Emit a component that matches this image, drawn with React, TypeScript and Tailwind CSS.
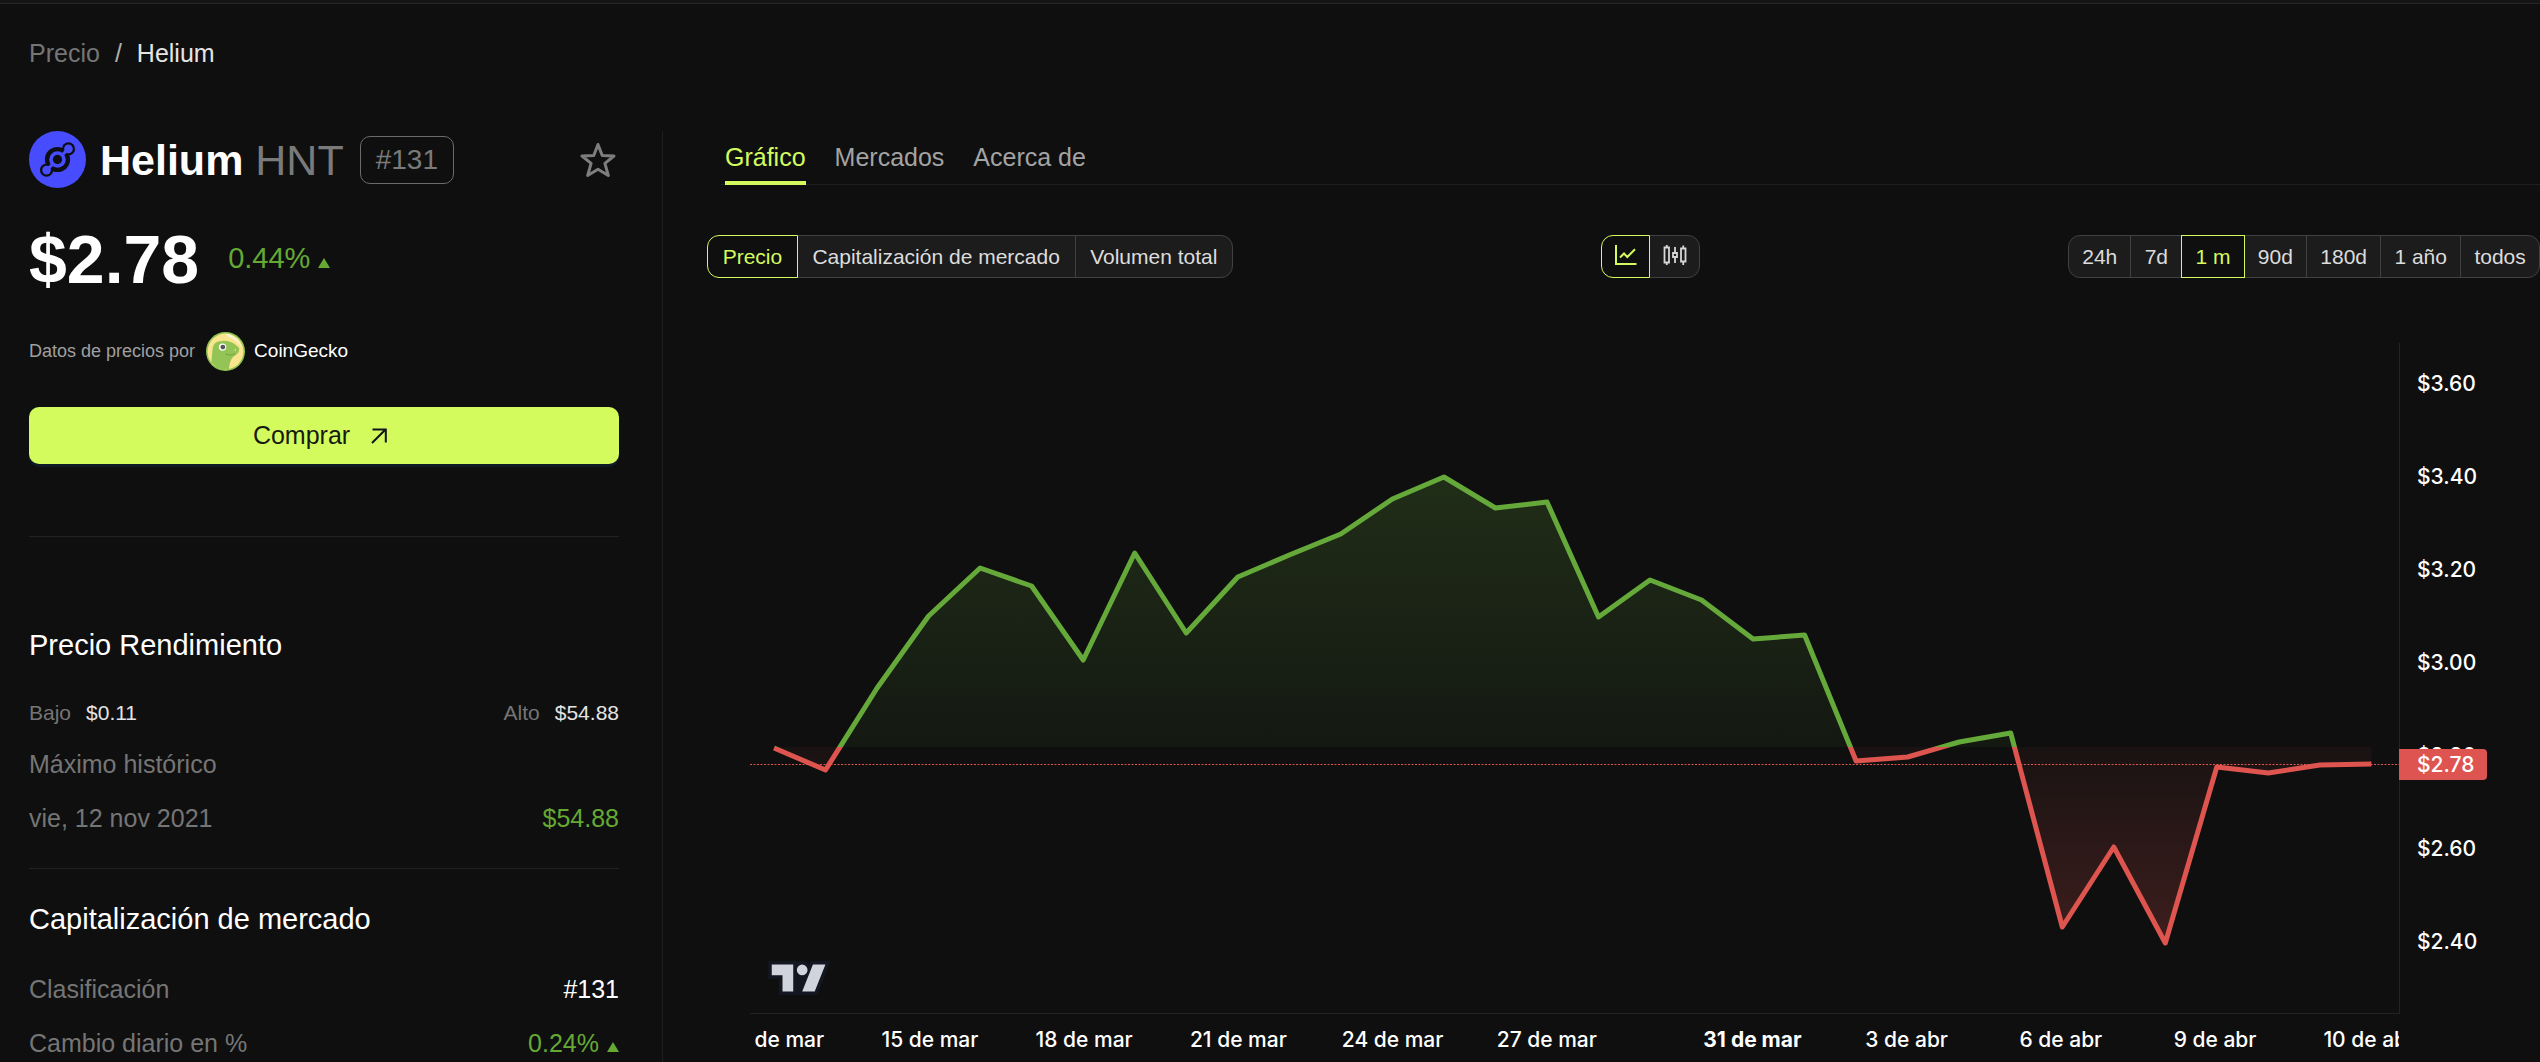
import React from "react";

const SANS = "font-['Liberation_Sans',Arial,sans-serif]";

const CHART_W = 1649;
const CHART_H = 670;
const BASELINE = 404;
const STEP = 51.53;
const FIRST_X = 24;

// Daily closing price, as chart heights measured from the top of the pane
const series = [
  405, 427, 345, 273, 225, 243, 317, 210, 290, 234, 212, 191, 156, 134, 165, 159,
  274, 237, 257, 296, 292, 418, 414, 399, 390, 584, 504, 600, 424, 430, 422, 421,
];

const dayLabels: Record<number, string> = {
  0: "12 de mar",
  3: "15 de mar",
  6: "18 de mar",
  9: "21 de mar",
  12: "24 de mar",
  15: "27 de mar",
  19: "31 de mar",
  22: "3 de abr",
  25: "6 de abr",
  28: "9 de abr",
  31: "10 de abr",
};

const priceTicks = ["$3.60", "$3.40", "$3.20", "$3.00", "$2.80", "$2.60", "$2.40"];

const points = series.map((y, i) => `${(FIRST_X + i * STEP).toFixed(1)},${y}`);
const linePath = `M${points.join("L")}`;
const areaPath = `${linePath}L${(FIRST_X + 31 * STEP).toFixed(1)},${BASELINE}L${FIRST_X},${BASELINE}Z`;

function HeliumLogo() {
  return (
    <svg viewBox="0 0 172 172" className="size-[57px] shrink-0" aria-label="Helium">
      <circle cx="86" cy="86" r="86" fill="#474dff" />
      <g fill="#0e0f14">
        <circle cx="86" cy="86" r="38" />
        <circle cx="119" cy="54" r="20" />
        <circle cx="53" cy="118" r="20" />
      </g>
      <g fill="#474dff">
        <circle cx="86" cy="86" r="25" />
        <circle cx="119" cy="54" r="13" />
        <circle cx="53" cy="118" r="13" />
      </g>
      <path d="M119 54 L53 118" stroke="#474dff" strokeWidth="9" />
      <circle cx="86" cy="86" r="14" fill="#0e0f14" />
    </svg>
  );
}

function GeckoLogo() {
  return (
    <svg viewBox="0 0 40 40" className="size-[39px] shrink-0" aria-hidden="true">
      <circle cx="20" cy="20" r="20" fill="#8dc351" />
      <circle cx="20" cy="20" r="18.4" fill="#f8e58e" />
      <path d="M20 1.8c7 .4 14 5 16.600 14-2.500-3.800-5.500-6.500-9.500-8.600C24 5.500 21.500 4.500 20 1.800Z" fill="#fbf3cf" />
      <path
        d="M5.500 31C6 26 6.300 20 7 16c.8-4.500 4.500-7 9-6.500 2.500-.8 5.500-.6 8.500.5 3 1 5 2.500 7 4 2.200 1.500 3 3 2.500 5-.5 3-3.500 4.600-6 6.500-2.500 2.500-4 6.500-4.500 12.600A18.400 18.400 0 0 1 5.500 31Z"
        fill="#94c356"
      />
      <circle cx="17" cy="15.500" r="3.800" fill="#fff" />
      <circle cx="17.300" cy="15.500" r="2.500" fill="#58595b" />
      <path d="M20 22.500c3 1.600 7 1.300 9.500-.3" stroke="#5f9b3a" strokeWidth=".8" fill="none" />
      <circle cx="30" cy="18.500" r=".7" fill="#e8f3d8" />
    </svg>
  );
}

function Star() {
  return (
    <svg viewBox="0 0 36 36" className="size-9" fill="none" stroke="#7d7d7d" strokeWidth="3" strokeLinejoin="round">
      <path d="M18 2.500 L22.200 13.400 L34 14 L24.900 21.300 L28.300 33.500 L18 27.300 L7.700 33.500 L11.100 21.300 L2 14 L13.800 13.400 Z" />
    </svg>
  );
}

function Up() {
  return (
    <svg viewBox="0 0 12 10" className="inline-block h-[10px] w-3" aria-hidden="true">
      <path d="M6 0 L12 10 H0 Z" fill="#65a934" />
    </svg>
  );
}

function LineIcon() {
  return (
    <svg viewBox="0 0 22 20" className="h-5 w-[22px]" fill="none" stroke="#d4fb5e" strokeWidth="2">
      <path d="M1 0V19H21.500" />
      <path d="M5 12.500L9 8.500L12.300 12L20 4.300" />
    </svg>
  );
}

function CandleIcon() {
  return (
    <svg viewBox="0 0 24 20" className="h-5 w-6" fill="none" stroke="#d6d6d6" strokeWidth="1.800">
      <path d="M1.500 2.500H6V17.500H1.500ZM3.750 0V2.500M3.750 17.500V20" />
      <path d="M10 8H14V12H10ZM12 2V8M12 12V18" />
      <path d="M18 3.500H22.500V16.500H18ZM20.250 0.500V3.500M20.250 16.500V20" />
    </svg>
  );
}

function TradingViewLogo() {
  return (
    <svg viewBox="0 0 35 19" className="h-[34px] w-[63px]" fill="none" aria-hidden="true">
      <g fillRule="evenodd" clipRule="evenodd">
        <path
          fill="#131722"
          d="M2 0H0v10h6v9h21.4l.5-1.300 6-15 1-2.700H23.700l-.5 1.300-.2.6a5 5 0 0 0-7-.9V0H2Zm20 17h4l5.200-13 .8-2h-7l-1 2.500-.2.500-1.500 3.800-.3.700V17Zm-.8-10a3 3 0 0 0 .7-2.700A3 3 0 1 0 16.800 7h4.400ZM14 7V2H2v6h6v9h4V7h2Z"
        />
        <path fill="#d1d4dc" d="M14 2H2v6h6v9h6V2Zm12 15h-7l6-15h7l-6 15Zm-7-9a3 3 0 1 0 0-6 3 3 0 0 0 0 6Z" />
      </g>
    </svg>
  );
}

interface SegmentProps {
  items: { label: string; content?: React.ReactNode }[];
  active: number;
  className: string;
  pad: string;
  name: string;
}

function Segmented({ items, active, className, pad, name }: SegmentProps) {
  return (
    <div role="group" aria-label={name} className={`flex h-[43px] text-[21px] leading-7 ${className}`}>
      {items.map((item, i) => {
        const first = i === 0 ? "rounded-l-xl" : "-ml-px";
        const last = i === items.length - 1 ? "rounded-r-xl" : "";
        const tone =
          i === active
            ? "relative border-[#d4fb5e] bg-[#0f0f0f] text-[#d4fb5e]"
            : "border-[#414141] bg-[#1c1c1c] text-[#dcdcdc]";
        return (
          <button
            key={item.label}
            type="button"
            aria-label={item.label}
            aria-pressed={i === active}
            className={`flex grow items-center justify-center whitespace-nowrap border ${pad} ${first} ${last} ${tone}`}
          >
            {item.content ?? item.label}
          </button>
        );
      })}
    </div>
  );
}

function Sidebar() {
  return (
    <aside className="w-[663px] shrink-0 border-r border-[#1f1f1f] pr-[43px] pl-[29px]">
      <div className="flex items-center">
        <HeliumLogo />
        <h1 className="ml-[14px] text-[43px] leading-[48px] font-bold text-white">
          Helium <span className="font-normal text-[#7a7a7a]">HNT</span>
        </h1>
        <span className="ml-4 flex h-12 items-center rounded-[10px] border border-[#6b6b6b] px-[15px] text-[28px] text-[#7a7a7a]">
          #131
        </span>
        <button type="button" aria-label="Favorito" className="mr-[3px] ml-auto">
          <Star />
        </button>
      </div>

      <div className="mt-[35px] flex items-center gap-[29px]">
        <span className="text-[68px] leading-[72px] font-bold text-white">$2.78</span>
        <span className="flex items-baseline gap-2 text-[29px] text-[#65a934]">
          0.44% <Up />
        </span>
      </div>

      <div className="mt-[37px] flex items-center">
        <span className="text-[18px] text-[#a0a0a0]">Datos de precios por</span>
        <a href="#coingecko" className="ml-[11px] flex items-center gap-[9px] text-[19px] text-white">
          <GeckoLogo />
          CoinGecko
        </a>
      </div>

      <button
        type="button"
        className="mt-9 flex h-[57px] w-full items-center justify-center gap-[21px] rounded-[10px] bg-[#d4fb5e] pr-2 text-[25px] text-[#161a10] shadow-[0_3px_0_#101a26]"
      >
        Comprar
        <svg viewBox="0 0 16 16" className="size-4" fill="none" stroke="#10141c" strokeWidth="2">
          <path d="M1 15L14.500 1.500M1.500 1.500H14.800V14.500" />
        </svg>
      </button>

      <section className="mt-[72px] border-t border-[#222] pt-[90px]">
        <h2 className="text-[29px] leading-9 text-white">Precio Rendimiento</h2>
        <div className="mt-9 flex justify-between text-[21px] leading-7 text-[#757575]">
          <span className="flex gap-[15px]">
            Bajo <span className="text-[#e4e4e4]">$0.11</span>
          </span>
          <span className="flex gap-[15px]">
            Alto <span className="text-[#e4e4e4]">$54.88</span>
          </span>
        </div>
        <p className="mt-[21px] text-[25px] leading-8 text-[#757575]">Máximo histórico</p>
        <div className="mt-[22px] flex justify-between text-[25px] leading-8 text-[#757575]">
          <span>vie, 12 nov 2021</span>
          <span className="text-[#65a934]">$54.88</span>
        </div>
      </section>

      <section className="mt-[34px] border-t border-[#222] pt-8">
        <h2 className="text-[29px] leading-9 text-white">Capitalización de mercado</h2>
        <div className="mt-9 flex justify-between text-[25px] leading-8 text-[#757575]">
          <span>Clasificación</span>
          <span className="text-white">#131</span>
        </div>
        <div className="mt-[22px] flex justify-between text-[25px] leading-8 text-[#757575]">
          <span>Cambio diario en %</span>
          <span className="flex items-baseline gap-2 text-[#65a934]">
            0.24% <Up />
          </span>
        </div>
      </section>
    </aside>
  );
}

function PriceChart() {
  return (
    <div className="mt-[65px] ml-[43px] flex font-['Inter',sans-serif] text-[21px] leading-7 font-medium text-white">
      <div className="min-w-0 flex-1">
        <div className="relative border-b border-[#232323]">
          <svg
            viewBox={`0 0 ${CHART_W} ${CHART_H}`}
            preserveAspectRatio="none"
            className="block h-[670px] w-full"
            fill="none"
          >
            <defs>
              <linearGradient id="gain" gradientUnits="userSpaceOnUse" x1="0" y1="134" x2="0" y2={BASELINE}>
                <stop offset="0" stopColor="#65a93a" stopOpacity=".2" />
                <stop offset="1" stopColor="#65a93a" stopOpacity=".06" />
              </linearGradient>
              <linearGradient id="loss" gradientUnits="userSpaceOnUse" x1="0" y1={BASELINE} x2="0" y2="600">
                <stop offset="0" stopColor="#de544f" stopOpacity=".05" />
                <stop offset="1" stopColor="#de544f" stopOpacity=".22" />
              </linearGradient>
              <clipPath id="above">
                <rect x="0" y="0" width={CHART_W} height={BASELINE} />
              </clipPath>
              <clipPath id="below">
                <rect x="0" y={BASELINE} width={CHART_W} height={CHART_H - BASELINE} />
              </clipPath>
            </defs>
            <g clipPath="url(#above)">
              <path d={areaPath} fill="url(#gain)" />
              <path d={linePath} stroke="#65a93a" strokeWidth="5" strokeLinejoin="round" />
            </g>
            <g clipPath="url(#below)">
              <path d={areaPath} fill="url(#loss)" />
              <path d={linePath} stroke="#de544f" strokeWidth="5" strokeLinejoin="round" />
            </g>
            <path d={`M0 421.500H${CHART_W}`} stroke="#de544f" strokeDasharray="2 1.5" />
          </svg>
          <a href="#tradingview" aria-label="TradingView" className="absolute bottom-[18px] left-[18px]">
            <TradingViewLogo />
          </a>
        </div>
        <div className="grid grid-cols-[repeat(32,minmax(0,1fr))] overflow-hidden pt-3 pr-1">
          {series.map((_, i) => (
            <span key={i} className={`flex justify-center whitespace-nowrap ${i === 19 ? "font-bold" : ""}`}>
              {dayLabels[i] ?? ""}
            </span>
          ))}
        </div>
      </div>
      <div className="relative h-[671px] w-[141px] shrink-0 border-l border-[#232323] pt-[27px] pl-[17px]">
        <div className="flex flex-col gap-[65px]">
          {priceTicks.map((t) => (
            <span key={t}>{t}</span>
          ))}
        </div>
        <span className="absolute top-[406px] -left-px flex h-[31px] w-[88px] items-center rounded-r-[4px] bg-[#de5450] pl-[18px]">
          $2.78
        </span>
      </div>
    </div>
  );
}

export default function App() {
  return (
    <div className={`flex h-screen flex-col overflow-hidden bg-[#0f0f0f] ${SANS}`}>
      <header className="h-1 shrink-0 border-b border-[#282828] bg-[#151515]" />
      <nav aria-label="Ruta" className="flex shrink-0 gap-[15px] px-[29px] pt-[33px] text-[25px] leading-8">
        <a href="#precio" className="text-[#757575]">
          Precio
        </a>
        <span className="text-[#b0b0b0]">/</span>
        <span className="text-[#e4e4e4]">Helium</span>
      </nav>

      <div className="mt-[62px] flex min-h-0 flex-1">
        <Sidebar />
        <main className="min-w-0 flex-1 pl-[44px]">
          <div role="tablist" className="ml-[14px] flex gap-[29px] border-b border-[#1f1f1f] pt-[10px] pl-1 text-[25px] leading-8">
            <button type="button" role="tab" aria-selected="true" className="-mb-px border-b-4 border-[#d4fb5e] pb-2 text-[#d4fb5e]">
              Gráfico
            </button>
            <button type="button" role="tab" aria-selected="false" className="-mb-px border-b-4 border-transparent pb-2 text-[#a3a3a3]">
              Mercados
            </button>
            <button type="button" role="tab" aria-selected="false" className="-mb-px border-b-4 border-transparent pb-2 text-[#a3a3a3]">
              Acerca de
            </button>
          </div>

          <div className="mt-[50px] flex justify-between">
            <Segmented
              name="Métrica"
              active={0}
              className="min-w-[526px]"
              pad="px-[13px]"
              items={[{ label: "Precio" }, { label: "Capitalización de mercado" }, { label: "Volumen total" }]}
            />
            <Segmented
              name="Tipo de gráfico"
              active={0}
              className="min-w-[99px]"
              pad="px-3 pb-1"
              items={[
                { label: "Línea", content: <LineIcon /> },
                { label: "Velas", content: <CandleIcon /> },
              ]}
            />
            <Segmented
              name="Periodo"
              active={2}
              className="min-w-[472px]"
              pad="px-3"
              items={[
                { label: "24h" },
                { label: "7d" },
                { label: "1 m" },
                { label: "90d" },
                { label: "180d" },
                { label: "1 año" },
                { label: "todos" },
              ]}
            />
          </div>

          <PriceChart />
        </main>
      </div>
    </div>
  );
}
